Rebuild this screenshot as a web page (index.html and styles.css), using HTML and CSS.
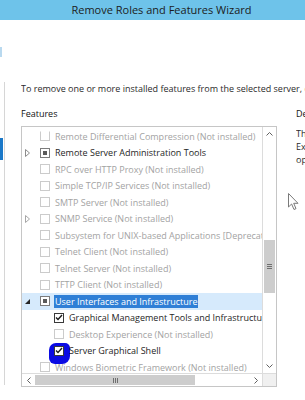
FILE: index.html
```html
<!DOCTYPE html>
<html lang="en">

<head>
    <meta charset="UTF-8" />
    <meta name="viewport" content="width=device-width, initial-scale=1.0" />
    <title>Remove Roles and Features Wizard</title>
    <link rel="stylesheet" href="styles.css">
</head>

<body>
    <header class="titlebar">Remove Roles and Features Wizard</header>

    <div class="window">
        <!-- left step list, mostly off screen -->
        <nav class="nav">
            <div class="nav-mark"></div>
            <div class="nav-rail">
                <div class="nav-active"></div>
            </div>
        </nav>

        <main class="main">
            <p class="intro">To remove one or more installed features from the selected server, check their boxes.</p>

            <div class="panels">
                <section class="features">
                    <h2 class="heading">Features</h2>
                    <div class="listbox">
                        <div class="rows">
                            <div class="row off"><span class="exp"></span><span class="cb cut"></span><span class="label">Remote Differential Compression (Not installed)</span></div>
                            <div class="row"><span class="exp"><svg width="5" height="8" viewBox="0 0 5 8"><path d="M0.5 0.5 L4.5 4 L0.5 7.5 Z" fill="none" stroke="#8c8c8c" stroke-width="1"/></svg></span><span class="cb mixed"></span><span class="label">Remote Server Administration Tools</span></div>
                            <div class="row off"><span class="exp"></span><span class="cb"></span><span class="label">RPC over HTTP Proxy (Not installed)</span></div>
                            <div class="row off"><span class="exp"></span><span class="cb"></span><span class="label">Simple TCP/IP Services (Not installed)</span></div>
                            <div class="row off"><span class="exp"></span><span class="cb"></span><span class="label">SMTP Server (Not installed)</span></div>
                            <div class="row off"><span class="exp"><svg width="5" height="8" viewBox="0 0 5 8"><path d="M0.5 0.5 L4.5 4 L0.5 7.5 Z" fill="none" stroke="#a6a6a6" stroke-width="1"/></svg></span><span class="cb"></span><span class="label">SNMP Service (Not installed)</span></div>
                            <div class="row off"><span class="exp"></span><span class="cb"></span><span class="label">Subsystem for UNIX-based Applications [Deprecated] (Not installed)</span></div>
                            <div class="row off"><span class="exp"></span><span class="cb"></span><span class="label">Telnet Client (Not installed)</span></div>
                            <div class="row off"><span class="exp"></span><span class="cb"></span><span class="label">Telnet Server (Not installed)</span></div>
                            <div class="row off"><span class="exp"></span><span class="cb"></span><span class="label">TFTP Client (Not installed)</span></div>
                            <div class="row sel"><span class="exp"><svg width="5" height="5" viewBox="0 0 5 5"><path d="M5 0 L5 5 L0 5 Z" fill="#262626"/></svg></span><span class="cb mixed"></span><span class="label">User Interfaces and Infrastructure</span></div>
                            <div class="row child"><span class="exp"></span><span class="cb on"><svg width="8" height="7" viewBox="0 0 8 7"><path d="M1 3.5 L3 5.5 L7 1" fill="none" stroke="#1a1a1a" stroke-width="1.4"/></svg></span><span class="label">Graphical Management Tools and Infrastructure</span></div>
                            <div class="row child off"><span class="exp"></span><span class="cb"></span><span class="label">Desktop Experience (Not installed)</span></div>
                            <div class="row child"><span class="exp"></span><span class="mark"><span class="cb on"><svg width="8" height="7" viewBox="0 0 8 7"><path d="M1 3.5 L3 5.5 L7 1" fill="none" stroke="#1a1a1a" stroke-width="1.4"/></svg></span></span><span class="label">Server Graphical Shell</span></div>
                            <div class="row off"><span class="exp"></span><span class="cb"></span><span class="label">Windows Biometric Framework (Not installed)</span></div>
                        </div>

                        <div class="vscroll">
                            <div class="arrow"><svg width="7" height="4" viewBox="0 0 7 4"><path d="M0.5 3.5 L3.5 0.5 L6.5 3.5" fill="none" stroke="#606060" stroke-width="1"/></svg></div>
                            <div class="track">
                                <div class="vthumb"><span class="grip-h"></span></div>
                            </div>
                            <div class="arrow"><svg width="7" height="4" viewBox="0 0 7 4"><path d="M0.5 0.5 L3.5 3.5 L6.5 0.5" fill="none" stroke="#606060" stroke-width="1"/></svg></div>
                        </div>

                        <div class="hscroll">
                            <div class="harrow"><svg width="4" height="7" viewBox="0 0 4 7"><path d="M3.5 0.5 L0.5 3.5 L3.5 6.5" fill="none" stroke="#606060" stroke-width="1"/></svg></div>
                            <div class="hthumb"><span class="grip-v"></span></div>
                            <div class="htrack"></div>
                            <div class="harrow"><svg width="4" height="7" viewBox="0 0 4 7"><path d="M0.5 0.5 L3.5 3.5 L0.5 6.5" fill="none" stroke="#606060" stroke-width="1"/></svg></div>
                        </div>

                        <div class="corner"></div>
                    </div>
                </section>

                <section class="description">
                    <h2 class="heading">Description</h2>
                    <p class="desc-line">The Server Graphical Shell provides the full</p>
                    <p class="desc-line">Explorer and Internet Explorer. Uninstalling</p>
                    <p class="desc-line">option reduces the servicing footprint.</p>
                </section>
            </div>
        </main>
    </div>

    <svg class="cursor" width="12" height="18" viewBox="0 0 12 18">
        <path d="M0.5 0.5 L0.5 14 L3.6 11 L6 16.5 L8 15.6 L5.7 10.3 L10 10.3 Z" fill="#fff" stroke="#7a7a7a" stroke-width="1" stroke-linejoin="round"/>
    </svg>
</body>

</html>
```

FILE: styles.css
```css
body {
    margin: 0;
    width: 305px;
    height: 400px;
    overflow: hidden;
    background-color: #fff;
    font-family: "Open Sans", "Noto Sans", sans-serif;
    font-size: 9px;
    color: #2b2b2b;
}

.titlebar {
    height: 20px;
    line-height: 20px;
    padding-left: 18px;
    text-align: center;
    background-color: #6ec3ea;
    color: #1c1c1c;
    font-size: 11px;
    white-space: nowrap;
}

.window {
    display: flex;
    height: 380px;
}

/* left steps pane */
.nav {
    width: 6px;
    flex: none;
}

.nav-mark {
    margin-top: 27px;
    width: 2px;
    height: 10px;
    background-color: #b9d9ef;
}

.nav-rail {
    margin-top: 25px;
    width: 5px;
    height: 303px;
    padding-top: 56px;
    box-sizing: border-box;
    border-right: 1px solid #d6d6d6;
}

.nav-active {
    width: 3px;
    height: 22px;
    background-color: #1a78c8;
}

.main {
    padding: 62px 0 0 15px;
    min-width: 0;
    flex: 1;
    overflow: hidden;
}

.intro {
    margin: 0 0 12px;
    line-height: 13px;
    white-space: nowrap;
    overflow: hidden;
}

.panels {
    display: grid;
    grid-template-columns: 256px 200px;
    column-gap: 19px;
}

.heading {
    margin: 0 0 6px;
    font-size: 9px;
    font-weight: 400;
    line-height: 13px;
    color: #111;
    white-space: nowrap;
}

.listbox {
    height: 261px;
    box-sizing: border-box;
    border: 1px solid #c6c6c6;
    display: grid;
    grid-template-columns: 240px 14px;
    grid-template-rows: 246px 13px;
}

.rows {
    overflow: hidden;
    padding-top: 1px;
}

.row {
    height: 16.5px;
    display: flex;
    align-items: center;
    padding-left: 3px;
    white-space: nowrap;
    color: #262626;
}

.row.child {
    padding-left: 17px;
}

.row.off {
    color: #a3a3a3;
}

.row.sel {
    background-color: #d6eafc;
}

.row.sel .label {
    background-color: #2f7fd6;
    color: #fff;
    line-height: 13px;
    padding: 0 1px;
    margin-left: 4px;
}

.exp {
    width: 15px;
    flex: none;
    display: flex;
    align-items: center;
}

.cb {
    width: 10px;
    height: 10px;
    flex: none;
    box-sizing: border-box;
    border: 1px solid #cbcbcb;
    background-color: #fff;
    display: flex;
    align-items: center;
    justify-content: center;
}

.cb.cut {
    border-top-color: transparent;
}

.cb.on {
    border-color: #3a3a3a;
}

.cb.mixed {
    border-color: #7c7c7c;
}

.cb.mixed::after {
    content: "";
    width: 4px;
    height: 4px;
    background-color: #5a5a5a;
}

/* blue marker scribble around a checkbox */
.mark {
    display: flex;
    padding: 3px 6px 8px 5px;
    margin: -3px -6px -8px -5px;
    background-color: #0b0be3;
    border-radius: 7px 5px 8px 6px;
}

.label {
    margin-left: 5px;
}

.vscroll {
    border-left: 1px solid #dcdcdc;
    display: flex;
    flex-direction: column;
}

.arrow {
    height: 14px;
    flex: none;
    display: flex;
    align-items: center;
    justify-content: center;
}

.track {
    flex: 1;
    padding-top: 99px;
}

.vthumb {
    margin-left: 1px;
    width: 11px;
    height: 53px;
    background-color: #cdcdcd;
    display: flex;
    align-items: center;
    justify-content: center;
}

.grip-h {
    width: 5px;
    height: 5px;
    background: repeating-linear-gradient(#6f6f6f 0 1px, transparent 1px 2px);
}

.hscroll {
    border-top: 1px solid #dcdcdc;
    display: flex;
}

.harrow {
    width: 13px;
    flex: none;
    display: flex;
    align-items: center;
    justify-content: center;
}

.hthumb {
    width: 160px;
    margin: 1px 0;
    background-color: #cdcdcd;
    display: flex;
    align-items: center;
    justify-content: center;
}

.grip-v {
    width: 5px;
    height: 5px;
    background: repeating-linear-gradient(90deg, #6f6f6f 0 1px, transparent 1px 2px);
}

.htrack {
    flex: 1;
}

.corner {
    background-color: #f0f0f0;
    border-top: 1px solid #dcdcdc;
    border-left: 1px solid #dcdcdc;
}

.description {
    min-width: 0;
    overflow: hidden;
}

.desc-line {
    margin: 0;
    line-height: 13px;
    white-space: nowrap;
}

.description .heading {
    margin-bottom: 7px;
}

.cursor {
    position: absolute;
    left: 288px;
    top: 193px;
}
```
